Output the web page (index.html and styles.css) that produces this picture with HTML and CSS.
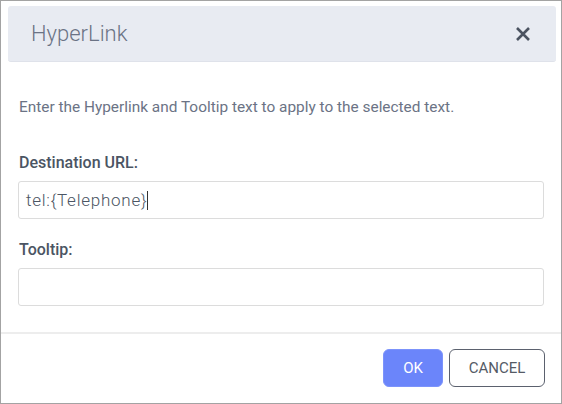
FILE: index.html
```html
<!DOCTYPE html>
<html>
<head>
<meta charset="utf-8">
<link rel="stylesheet" href="styles.css">
</head>
<body>
<div class="dialog">
  <div class="header">
    <span class="title">HyperLink</span>
    <svg class="close" width="16" height="16" viewBox="0 0 16 16"><path d="M2 2 L14 14 M14 2 L2 14" stroke="#4b5361" stroke-width="2.6" stroke-linecap="butt"/></svg>
  </div>
  <div class="content">
    <p class="desc">Enter the Hyperlink and Tooltip text to apply to the selected text.</p>
    <div class="label">Destination URL:</div>
    <div class="input"><span class="value">tel:{Telephone}</span><span class="caret"></span></div>
    <div class="label label2">Tooltip:</div>
    <div class="input input2"></div>
  </div>
  <div class="footer">
    <button class="btn ok">OK</button>
    <button class="btn cancel">CANCEL</button>
  </div>
</div>
</body>
</html>
```
FILE: styles.css
```css
html, body { margin: 0; padding: 0; background: #fff; }
body { font-family: Roboto, "Liberation Sans", sans-serif; }
.dialog {
  box-sizing: border-box;
  width: 562px;
  height: 404px;
  border: 1px solid #a3a3a3;
  display: flex;
  flex-direction: column;
}
.header {
  box-sizing: border-box;
  margin: 5px 5px 0 7px;
  height: 56px;
  background: #e8ebf2;
  border-radius: 3px;
  border-bottom: 1px solid #dfe2ea;
  display: flex;
  align-items: center;
  justify-content: space-between;
  padding: 0 25px 0 23px;
}
.title {
  font-size: 22px;
  font-weight: 300;
  color: #6b7385;
}
.close { display: block; }
.content {
  padding: 0 17px;
  flex: 1;
}
.desc {
  margin: 34px 0 0 1px;
  font-size: 15.4px;
  color: #6b7385;
  line-height: 22px;
}
.label {
  margin-top: 34px;
  font-size: 16px;
  font-weight: 500;
  color: #4b5563;
  line-height: 22px;
  padding-left: 1px;
}
.label2 { margin-top: 20px; }
.input {
  box-sizing: border-box;
  margin-top: 7px;
  height: 38px;
  border: 1px solid #dcdcdc;
  border-radius: 3px;
  display: flex;
  align-items: center;
  padding-left: 7px;
  font-size: 17px;
  font-weight: 300;
  letter-spacing: 0.75px;
  color: #4b5563;
}
.caret {
  display: inline-block;
  width: 1px;
  height: 19px;
  background: #333;
  margin-left: -0.5px;
}
.footer {
  box-sizing: border-box;
  height: 71px;
  border-top: 2px solid #ededed;
  display: flex;
  justify-content: flex-end;
  align-items: flex-start;
  gap: 6px;
  padding: 15px 16px 0 0;
}
.btn {
  box-sizing: border-box;
  height: 38px;
  font-family: Roboto, "Liberation Sans", sans-serif;
  font-size: 15px;
  border-radius: 6px;
  cursor: pointer;
}
.ok {
  width: 60px;
  background: #6b85fa;
  border: 1px solid #7c93fb;
  color: #fff;
}
.cancel {
  width: 96px;
  background: #fff;
  border: 1px solid #5b616e;
  color: #555b66;
}
```
